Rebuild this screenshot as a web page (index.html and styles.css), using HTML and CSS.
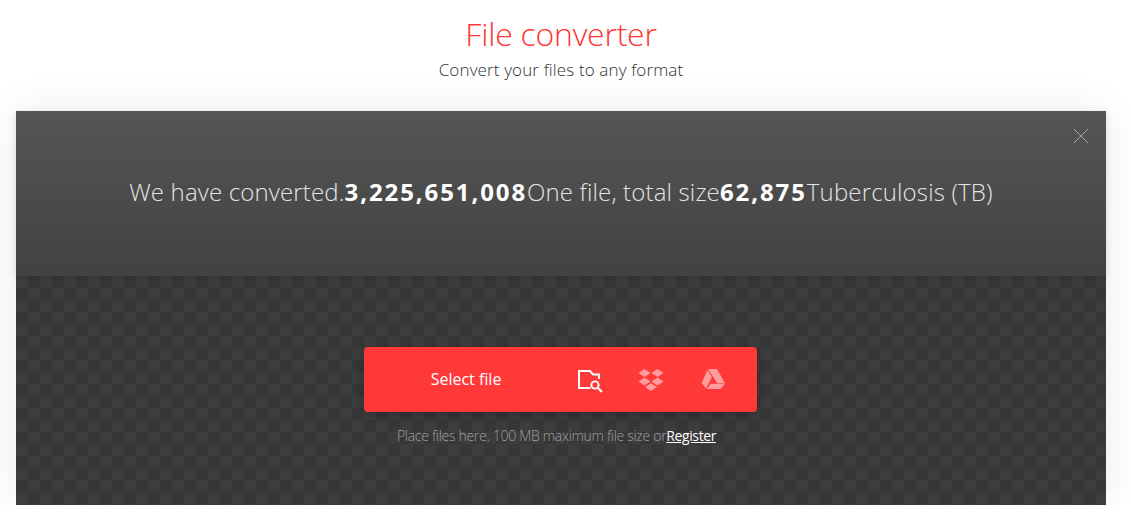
FILE: index.html
```html
<!DOCTYPE html>
<html lang="en">
<head>
    <meta charset="UTF-8">
    <title>File converter</title>
    <link rel="stylesheet" href="styles.css">
</head>
<body>
    <header class="page-head">
        <h1>File converter</h1>
        <p>Convert your files to any format</p>
    </header>
    <main class="converter">
        <section class="stats">
            <button class="close" aria-label="Close">
                <svg width="16" height="16" viewBox="0 0 16 16"><path d="M1 1l14 14M15 1L1 15" stroke="#a3a3a3" stroke-width="1" fill="none"/></svg>
            </button>
            <p>We have converted.<b>3,225,651,008</b>One file, total size<b>62,875</b>Tuberculosis (TB)</p>
        </section>
        <section class="upload">
            <div class="picker">
                <span class="picker-label">Select file</span>
                <span class="picker-icons">
                    <svg class="icon" width="28" height="27" viewBox="0 0 28 27">
                        <path d="M14.5 22H3V5H14l3 3.500H23V13" fill="none" stroke="#fff" stroke-width="2"/>
                        <circle cx="19" cy="19" r="3.600" fill="none" stroke="#fff" stroke-width="1.900"/>
                        <path d="M21.700 21.700L26 26" stroke="#fff" stroke-width="2.200"/>
                    </svg>
                    <svg class="icon faded" width="28" height="27" viewBox="0 0 28 27">
                        <path d="M6.500 3l6 4-6 4-6-4zM19.500 3l6 4-6 4-6-4zM6.500 11.500l6 4-6 4-6-4zM19.500 11.500l6 4-6 4-6-4zM13 17.200l6 3.900-6 3.900-6-3.900z" fill="#fff"/>
                    </svg>
                    <svg class="icon faded" width="28" height="27" viewBox="0 0 28 27">
                        <path d="M8 3H17l8 14.200H17.300zM7.500 3.800L11.900 11 6.200 22.500 1.600 17.200zM7 23L10.700 17.800H25L20.500 23z" fill="#fff"/>
                    </svg>
                </span>
            </div>
            <p class="hint">Place files here. 100 MB maximum file size or<a href="#">Register</a></p>
        </section>
    </main>
</body>
</html>
```

FILE: styles.css
```css
/* Basic page */
body {
    margin: 0;
    background-color: #fff;
    font-family: "Open Sans", sans-serif;
    overflow: hidden;
}

.page-head {
    height: 111px;
    margin: 0 25px 0 16px;
    padding-top: 12px;
    box-sizing: border-box;
    text-align: center;
}
.page-head h1 {
    margin: 0;
    font-size: 32px;
    line-height: 44px;
    font-weight: 300;
    letter-spacing: -0.25px;
    color: #ff3535;
}
.page-head p {
    margin: 0;
    padding-top: 2px;
    font-size: 17px;
    line-height: 24px;
    font-weight: 300;
    letter-spacing: 0.13px;
    color: #2f2f36;
}

.converter {
    margin: 0 25px 0 16px;
    height: 394px;
    display: flex;
    flex-direction: column;
    box-shadow: 0 0 40px rgba(0,0,0,0.08);
}

.stats {
    position: relative;
    height: 165px;
    flex: none;
    box-sizing: border-box;
    padding-top: 64px;
    background: linear-gradient(#555555, #424242);
    box-shadow: 0 2px 6px rgba(0,0,0,0.12);
    text-align: center;
}
.stats p {
    margin: 0;
    font-size: 24px;
    line-height: 33px;
    font-weight: 300;
    letter-spacing: 0.15px;
    color: #e4e4e4;
}
.stats b {
    font-weight: 700;
    letter-spacing: 1.9px;
    color: #fff;
}
.close {
    position: absolute;
    top: 17px;
    right: 17px;
    width: 16px;
    height: 16px;
    padding: 0;
    border: 0;
    background: none;
    display: flex;
}

.upload {
    flex: 1;
    padding-top: 71px;
    display: flex;
    flex-direction: column;
    align-items: center;
    background-image: conic-gradient(#373737 25%, #3d3d3d 0 50%, #373737 0 75%, #3d3d3d 0);
    background-size: 24px 24px;
}

.picker {
    width: 393px;
    height: 65px;
    margin-right: 1px;
    display: flex;
    align-items: center;
    background-color: #ff3838;
    border-radius: 4px;
    box-shadow: 0 3px 12px rgba(0,0,0,0.25);
}
.picker-label {
    width: 204px;
    padding-bottom: 1px;
    text-align: center;
    font-size: 16px;
    color: #fff;
}
.picker-icons {
    display: flex;
    gap: 34px;
    margin-left: 8px;
}
.icon {
    display: block;
}
.faded {
    opacity: 0.5;
}

.hint {
    margin: 14px 9px 0 0;
    font-size: 14px;
    line-height: 20px;
    font-weight: 300;
    letter-spacing: -0.3px;
    color: #a0a0a0;
}
.hint a {
    color: #fff;
    font-weight: 400;
    letter-spacing: -0.4px;
    text-decoration: underline;
}
```
